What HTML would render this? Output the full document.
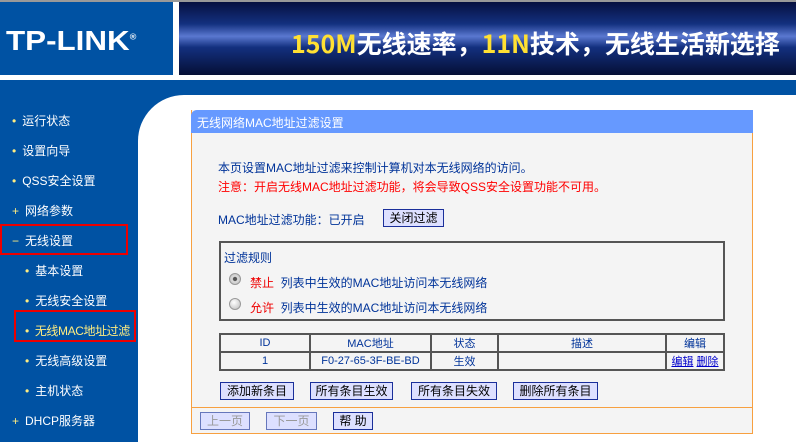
<!DOCTYPE html>
<html><head><meta charset="utf-8"><style>
*{margin:0;padding:0;box-sizing:border-box}
body{width:796px;height:442px;overflow:hidden;background:#fff;font-family:"Liberation Sans","WenQuanYi Zen Hei","Noto Sans CJK SC",sans-serif;font-size:12px;position:relative}
.abs{position:absolute}
.logo{left:0;top:2px;width:173px;height:73px;background:#0052a3}
.logo span{position:absolute;left:6px;top:23px;color:#fff;font:bold 28px "Liberation Sans",sans-serif;letter-spacing:0px;transform:scaleX(1.12);transform-origin:left}
.banner{left:179px;top:2px;width:617px;height:73px;background:linear-gradient(180deg,#061040 0%,#13307f 30%,#5a78d0 47%,#13307f 62%,#050f35 100%)}
.banner span{position:absolute;left:112px;top:23px;font:bold 25px "WenQuanYi Zen Hei","Noto Sans CJK SC",sans-serif;color:#fff;white-space:nowrap}
.band{left:0;top:80px;width:796px;height:15px;background:#0052a3}
.side{left:0;top:95px;width:138px;height:347px;background:#0052a3}
.cb{left:138px;top:95px;width:50px;height:50px;background:#0052a3}
.corner{left:138px;top:95px;width:50px;height:50px;background:#fff;border-top-left-radius:46px}
.nav{position:absolute;color:#fff;font-size:12px;white-space:nowrap}
.nav b{color:#ffec80;margin-right:6px;font-weight:normal}
.panel{left:191px;top:110px;width:562px;height:324px;background:#f4f4f4;border:1px solid #f7a040;border-top:none}
.title{left:191px;top:110px;width:562px;height:23px;background:#6699ff;color:#fff;padding:4px 6px;border-top-left-radius:6px}
.t{position:absolute;color:#003399;white-space:nowrap}
.btn{position:absolute;height:18px;background:#dde0ff;border:1px solid #1a2f9a;color:#000;text-align:center;line-height:16px;font-size:12px}
.dis{color:#999;border-color:#6677bb}
table{position:absolute;left:219px;top:333px;width:506px;border-collapse:collapse;color:#003399;font-size:11px}
td{border:2px solid #555;height:18px;text-align:center;background:#f4f4f4}
.radio{position:absolute;width:12px;height:12px;border-radius:50%;background:radial-gradient(circle at 40% 35%,#fff,#bbb);border:1px solid #999}
</style></head><body>
<div class="abs" style="left:0;top:0;width:796px;height:2px;background:#999"></div>
<div class="abs logo"><span>TP-LINK<sup style="font-size:8px">®</sup></span></div>
<div class="abs banner"><span><span style="position:static;color:#ffe033">150M</span>无线速率，<span style="position:static;color:#ffe033">11N</span>技术，无线生活新选择</span></div>
<div class="abs band"></div>
<div class="abs side"></div>
<div class="abs cb"></div>
<div class="abs corner"></div>
<div class="nav" style="left:12px;top:112px"><b>•</b>运行状态</div>
<div class="nav" style="left:12px;top:142px"><b>•</b>设置向导</div>
<div class="nav" style="left:12px;top:172px"><b>•</b>QSS安全设置</div>
<div class="nav" style="left:12px;top:202px"><b>+</b>网络参数</div>
<div class="nav" style="left:12px;top:232px"><b>−</b>无线设置</div>
<div class="abs" style="left:0;top:224px;width:128px;height:31px;border:2px solid #e00"></div>
<div class="nav" style="left:25px;top:262px"><b>•</b>基本设置</div>
<div class="nav" style="left:25px;top:292px"><b>•</b>无线安全设置</div>
<div class="nav" style="left:25px;top:322px;color:#ffec80;letter-spacing:-0.4px"><b>•</b>无线MAC地址过滤</div>
<div class="abs" style="left:14px;top:310px;width:122px;height:32px;border:2px solid #e00"></div>
<div class="nav" style="left:25px;top:352px"><b>•</b>无线高级设置</div>
<div class="nav" style="left:25px;top:382px"><b>•</b>主机状态</div>
<div class="nav" style="left:12px;top:412px"><b>+</b>DHCP服务器</div>
<div class="abs panel"></div>
<div class="abs title">无线网络MAC地址过滤设置</div>
<div class="t" style="left:218px;top:159px">本页设置MAC地址过滤来控制计算机对本无线网络的访问。</div>
<div class="t" style="left:218px;top:178px;color:#f00">注意：开启无线MAC地址过滤功能，将会导致QSS安全设置功能不可用。</div>
<div class="t" style="left:218px;top:211px">MAC地址过滤功能：已开启</div>
<div class="btn" style="left:383px;top:209px;width:61px">关闭过滤</div>
<div class="abs" style="left:219px;top:241px;width:506px;height:80px;border:2px solid #555"></div>
<div class="t" style="left:224px;top:249px">过滤规则</div>
<div class="radio" style="left:229px;top:273px;background:radial-gradient(circle,#555 25%,#ddd 35%,#bbb)"></div>
<div class="t" style="left:250px;top:274px"><span style="color:#e00">禁止</span>&nbsp; 列表中生效的MAC地址访问本无线网络</div>
<div class="radio" style="left:229px;top:298px"></div>
<div class="t" style="left:250px;top:299px"><span style="color:#e00">允许</span>&nbsp; 列表中生效的MAC地址访问本无线网络</div>
<table><tr><td style="width:90px">ID</td><td style="width:121px">MAC地址</td><td style="width:67px">状态</td><td style="width:168px">描述</td><td>编辑</td></tr>
<tr><td>1</td><td>F0-27-65-3F-BE-BD</td><td>生效</td><td></td><td><u style="color:#00c">编辑</u> <u style="color:#00c">删除</u></td></tr></table>
<div class="btn" style="left:220px;top:382px;width:74px">添加新条目</div>
<div class="btn" style="left:310px;top:382px;width:83px">所有条目生效</div>
<div class="btn" style="left:411px;top:382px;width:86px">所有条目失效</div>
<div class="btn" style="left:513px;top:382px;width:85px">删除所有条目</div>
<div class="abs" style="left:191px;top:407px;width:562px;height:1px;background:#f7a040"></div>
<div class="btn dis" style="left:200px;top:412px;width:50px">上一页</div>
<div class="btn dis" style="left:266px;top:412px;width:51px">下一页</div>
<div class="btn" style="left:333px;top:412px;width:40px">帮 助</div>
</body></html>
